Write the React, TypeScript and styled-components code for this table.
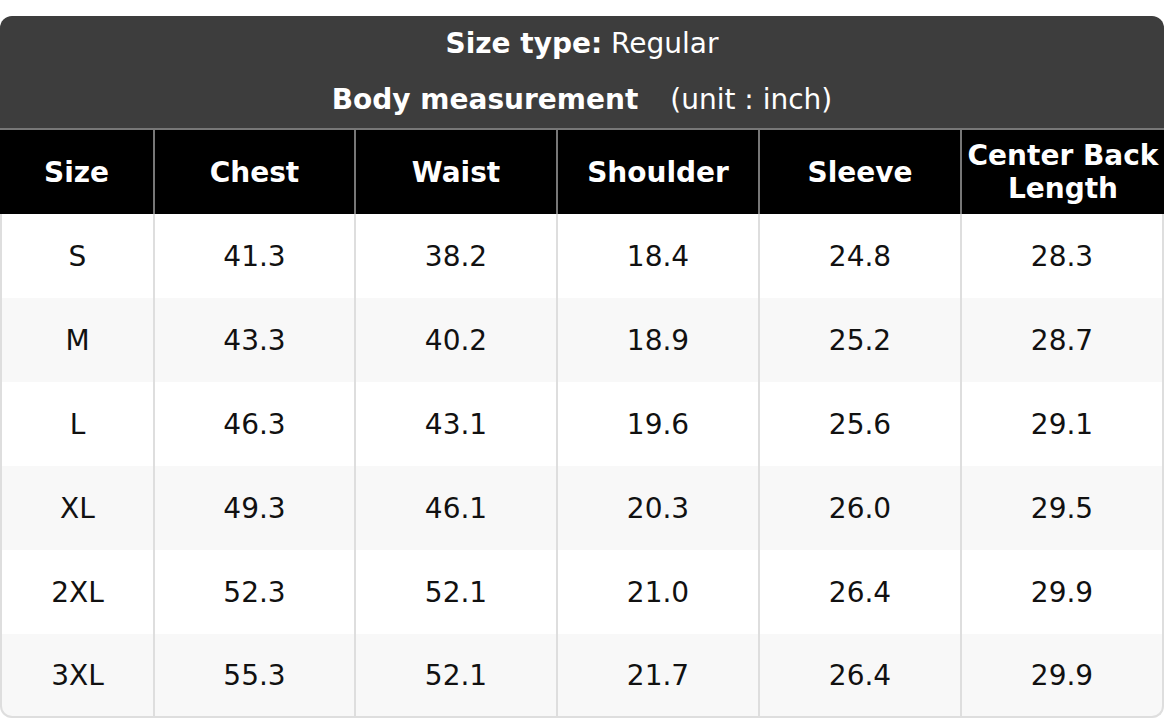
import React from 'react';
import styled, { createGlobalStyle } from 'styled-components';

const GlobalStyle = createGlobalStyle`
  body {
    margin: 0;
    background: #fff;
    font-family: "DejaVu Sans", "Liberation Sans", sans-serif;
  }
`;

const Card = styled.div`
  margin-top: 16px;
  width: 1164px;
`;

const Banner = styled.div`
  background-color: #3d3d3d;
  color: #fff;
  border-radius: 12px 12px 0 0;
  padding: 12px 0 12px;
  display: flex;
  flex-direction: column;
  align-items: center;
  gap: 24px;
  font-size: 28px;
  line-height: 32px;
`;

const BannerLine = styled.div`
  white-space: pre;
`;

const Strong = styled.b`
  font-weight: bold;
`;

const Unit = styled.span`
  margin-left: 32px;
`;

const Table = styled.table`
  width: 100%;
  table-layout: fixed;
  border-collapse: separate;
  border-spacing: 0;
  font-size: 28px;
`;

const HeadCell = styled.th`
  background-color: #000;
  color: #fff;
  font-weight: bold;
  height: 86px;
  padding: 0;
  line-height: 33px;
  text-align: center;
  border-top: 2px solid #777;
  border-right: 2px solid #777;
  box-sizing: border-box;
  &:last-child {
    border-right: none;
  }
`;

const Row = styled.tr<{ $shade: boolean }>`
  background-color: ${(p) => (p.$shade ? '#f8f8f8' : '#fff')};
`;

const Cell = styled.td<{ $last: boolean }>`
  height: 84px;
  padding: 0;
  text-align: center;
  color: #111;
  box-sizing: border-box;
  border-right: 2px solid #dedede;
  ${(p) => (p.$last ? 'border-bottom: 2px solid #dedede;' : '')}
  &:first-child {
    border-left: 2px solid #dedede;
    ${(p) => (p.$last ? 'border-bottom-left-radius: 12px;' : '')}
  }
  &:last-child {
    ${(p) => (p.$last ? 'border-bottom-right-radius: 12px;' : '')}
  }
`;

const columns = ['Size', 'Chest', 'Waist', 'Shoulder', 'Sleeve', 'Center Back Length'];
const widths = [155, 201, 202, 202, 202, 202];

const rows = [
  ['S', '41.3', '38.2', '18.4', '24.8', '28.3'],
  ['M', '43.3', '40.2', '18.9', '25.2', '28.7'],
  ['L', '46.3', '43.1', '19.6', '25.6', '29.1'],
  ['XL', '49.3', '46.1', '20.3', '26.0', '29.5'],
  ['2XL', '52.3', '52.1', '21.0', '26.4', '29.9'],
  ['3XL', '55.3', '52.1', '21.7', '26.4', '29.9'],
];

const App: React.FC = () => {
  return (
    <>
      <GlobalStyle />
      <Card>
        <Banner>
          <BannerLine>
            <Strong>Size type:</Strong> Regular
          </BannerLine>
          <BannerLine>
            <Strong>Body measurement</Strong>
            <Unit>(unit : inch)</Unit>
          </BannerLine>
        </Banner>
        <Table>
          <colgroup>
            {widths.map((w, i) => (
              <col key={i} style={{ width: w }} />
            ))}
          </colgroup>
          <thead>
            <tr>
              {columns.map((c) => (
                <HeadCell key={c}>{c === 'Center Back Length' ? <>Center Back<br />Length</> : c}</HeadCell>
              ))}
            </tr>
          </thead>
          <tbody>
            {rows.map((r, i) => (
              <Row key={r[0]} $shade={i % 2 === 1}>
                {r.map((v, j) => (
                  <Cell key={j} $last={i === rows.length - 1}>{v}</Cell>
                ))}
              </Row>
            ))}
          </tbody>
        </Table>
      </Card>
    </>
  );
};

export default App;
